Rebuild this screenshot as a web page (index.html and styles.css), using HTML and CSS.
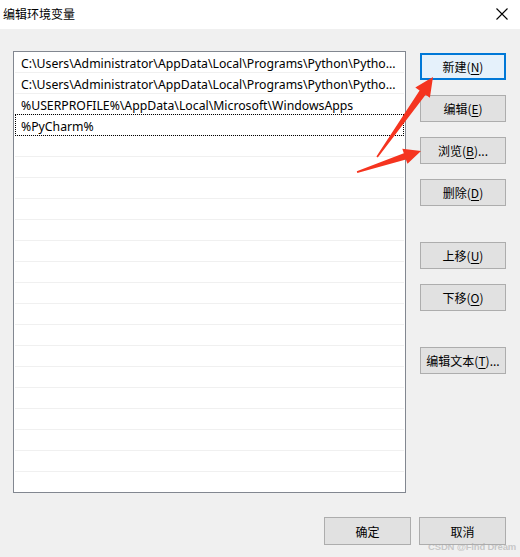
FILE: index.html
```html
<!DOCTYPE html>
<html lang="zh">
<head>
<meta charset="utf-8">
<title>编辑环境变量</title>
<link rel="stylesheet" href="styles.css">
</head>
<body>
<div class="dialog">
  <div class="titlebar">
    <span class="title">编辑环境变量</span>
    <svg class="close" width="12" height="12" viewBox="0 0 12 12"><path d="M0.5 0.5 L11.5 11.5 M11.5 0.5 L0.5 11.5" stroke="#000" stroke-width="1.1" fill="none"/></svg>
  </div>
  <div class="content">
    <div class="main">
      <div class="list">
        <div class="row">C:\Users\Administrator\AppData\Local\Programs\Python\Pytho...</div>
        <div class="row">C:\Users\Administrator\AppData\Local\Programs\Python\Pytho...</div>
        <div class="row">%USERPROFILE%\AppData\Local\Microsoft\WindowsApps</div>
        <div class="row focus">%PyCharm%</div>
        <div class="row"></div><div class="row"></div><div class="row"></div><div class="row"></div>
        <div class="row"></div><div class="row"></div><div class="row"></div><div class="row"></div>
        <div class="row"></div><div class="row"></div><div class="row"></div><div class="row"></div>
        <div class="row"></div><div class="row"></div><div class="row"></div><div class="row"></div>
        <div class="row last"></div>
      </div>
      <div class="buttons">
        <button class="btn default">新建(<u>N</u>)</button>
        <button class="btn">编辑(<u>E</u>)</button>
        <button class="btn">浏览(<u>B</u>)...</button>
        <button class="btn">删除(<u>D</u>)</button>
        <button class="btn group">上移(<u>U</u>)</button>
        <button class="btn">下移(<u>O</u>)</button>
        <button class="btn group">编辑文本(<u>T</u>)...</button>
      </div>
    </div>
    <div class="footer">
      <button class="btn">确定</button>
      <button class="btn">取消</button>
    </div>
  </div>
  <svg class="arrows" width="520" height="557" viewBox="0 0 520 557">
    <polygon points="376.4,156.5 419.6,90.6 415.3,87.6 433,77 429.9,97.8 425.6,94.8 377.8,157.5" fill="#f5341f"/>
    <polygon points="356.8,171.2 403.8,153.2 402.3,148.8 421,151 407.5,163.8 405.9,159.4 357.3,173" fill="#f5341f"/>
  </svg>
  <span class="watermark">CSDN @Find Dream</span>
</div>
</body>
</html>
```
FILE: styles.css
```css
* { box-sizing: border-box; }
html, body { margin: 0; padding: 0; }
body {
  width: 520px;
  height: 557px;
  background: #f0f0f0;
  font-family: "Noto Sans", "Noto Sans CJK SC", sans-serif;
  font-size: 12px;
  color: #000;
  overflow: hidden;
}
.dialog {
  position: relative;
  width: 520px;
  height: 557px;
}
.titlebar {
  height: 29px;
  background: #fff;
  display: flex;
  align-items: center;
  justify-content: space-between;
  padding: 0 12px 0 3px;
}
.title {
  font-family: "Noto Sans CJK SC", sans-serif;
  font-size: 12px;
  line-height: 16px;
  margin-top: -1px;
}
.close { margin-top: -1px; }
.content {
  padding: 22px 14px 0 13px;
}
.main {
  display: flex;
  align-items: flex-start;
  gap: 14px;
}
.list {
  width: 393px;
  height: 442px;
  background: #fff;
  border: 1px solid #828790;
  padding: 0 1px;
  overflow: hidden;
}
.row {
  height: 21px;
  border-bottom: 1px solid #f0f0f0;
  padding-left: 6px;
  line-height: 23px;
  overflow: hidden;
  white-space: nowrap;
  font-family: "Noto Sans", "Noto Sans CJK SC", sans-serif;
  font-size: 12.25px;
}
.row.focus {
  outline: 1px dotted #000;
  outline-offset: -1px;
  margin-top: -1px;
  height: 22px;
  line-height: 25px;
}
.buttons {
  display: flex;
  flex-direction: column;
  gap: 15px;
  padding-top: 2px;
}
.btn {
  width: 86px;
  height: 27px;
  background: #e1e1e1;
  border: 1px solid #adadad;
  font-family: "Noto Sans CJK SC", sans-serif;
  font-size: 12px;
  color: #000;
  padding: 0;
  margin: 0;
}
.btn u { text-underline-offset: 2px; }
.btn.default {
  background: #e5f1fb;
  border: 2px solid #0078d7;
}
.btn.group { margin-top: 21px; }
.footer {
  display: flex;
  justify-content: flex-end;
  gap: 8px;
  margin-top: 24px;
}
.footer .btn { width: 87px; height: 28px; }
.arrows {
  position: absolute;
  left: 0;
  top: 0;
  pointer-events: none;
}
.watermark {
  position: absolute;
  right: 4px;
  bottom: 5px;
  font-family: "Liberation Sans", sans-serif;
  font-size: 9.5px;
  font-weight: bold;
  letter-spacing: -0.2px;
  color: rgba(170,170,170,0.6);
}
```
